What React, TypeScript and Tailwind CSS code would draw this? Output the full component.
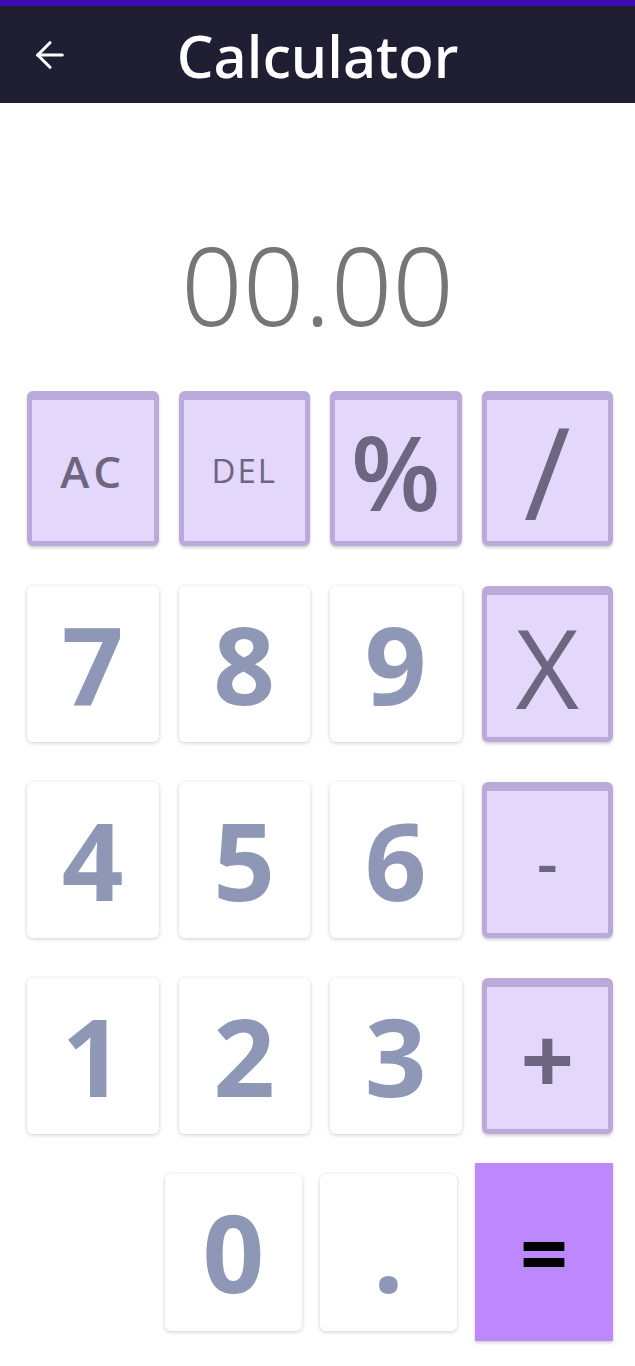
import { ArrowLeft } from "lucide-react";

const opKeys = "flex items-center justify-center rounded-md border-x-[5px] border-b-[5px] border-t-[9px] border-[#bba9d9] bg-[#e4d7fc] text-[#6e6581] shadow-[0_2px_3px_rgba(0,0,0,0.18)]";
const numKeys = "flex items-center justify-center rounded-md bg-white text-[#8e98b6] font-bold shadow-[0_1px_4px_rgba(0,0,0,0.2)]";

const NumKey = ({ label }: { label: string }) => (
  <button className={`${numKeys} h-[156px] text-[108px] leading-none`}>{label}</button>
);

const App = () => (
  <div className="min-h-[1366px] w-[635px] bg-white font-['Open_Sans',sans-serif]">
    <div className="h-[6px] bg-[#3a0bb3]" />
    <header className="relative flex h-[97px] items-center justify-center bg-[#1f1e33]">
      <ArrowLeft className="absolute left-[29px] top-[28px] h-[42px] w-[42px] text-white" strokeWidth={1.8} />
      <h1 className="pt-[2px] font-['Noto_Sans',sans-serif] text-[58px] font-medium leading-none text-white">Calculator</h1>
    </header>

    <div className="flex h-[288px] items-center justify-center pt-[76px]">
      <span className="font-['Noto_Sans',sans-serif] text-[108px] font-light leading-none text-[#767676]">00.00</span>
    </div>

    <div className="grid grid-cols-4 gap-x-[20px] gap-y-[40px] pl-[27px] pr-[22px]">
      <button className={`${opKeys} h-[155px] text-[44px] tracking-[4px] font-semibold`}>AC</button>
      <button className={`${opKeys} h-[155px] text-[33px] tracking-[2px]`}>DEL</button>
      <button className={`${opKeys} h-[155px] text-[104px] font-semibold leading-none`}>%</button>
      <button className={`${opKeys} h-[155px] text-[128px] font-medium leading-none`}>/</button>

      <NumKey label="7" />
      <NumKey label="8" />
      <NumKey label="9" />
      <button className={`${opKeys} h-[156px] text-[110px] leading-none`}>X</button>

      <NumKey label="4" />
      <NumKey label="5" />
      <NumKey label="6" />
      <button className={`${opKeys} h-[156px] text-[64px] font-semibold leading-none`}>-</button>

      <NumKey label="1" />
      <NumKey label="2" />
      <NumKey label="3" />
      <button className={`${opKeys} h-[156px] text-[94px] font-bold leading-none`}>+</button>
    </div>

    <div className="mt-[29px] flex items-center justify-end gap-[18px] pr-[22px]">
      <button className={`${numKeys} h-[157px] w-[137px] text-[108px] leading-none`}>0</button>
      <button className={`${numKeys} h-[157px] w-[137px] text-[108px] leading-none`}>.</button>
      <button className="flex h-[178px] w-[138px] items-center justify-center bg-[#bd88fb] text-[84px] font-bold leading-none text-black shadow-[0_2px_3px_rgba(0,0,0,0.18)]">
        =
      </button>
    </div>
  </div>
);

export default App;
